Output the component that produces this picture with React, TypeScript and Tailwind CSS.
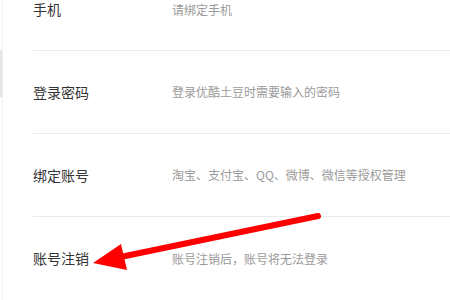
const rows = [
  { label: '手机', desc: '请绑定手机' },
  { label: '登录密码', desc: '登录优酷土豆时需要输入的密码' },
  { label: '绑定账号', desc: '淘宝、支付宝、QQ、微博、微信等授权管理' },
  { label: '账号注销', desc: '账号注销后，账号将无法登录' },
];

const App = () => {
  return (
    <div
      className="relative flex w-[450px] h-[300px] overflow-hidden bg-white"
      style={{ fontFamily: '"Noto Sans CJK SC", "Noto Sans", sans-serif' }}
    >
      {/* scrollbar remnant on the far left */}
      <div className="w-[2px] shrink-0">
        <div className="mt-[50px] h-[47px] bg-[#e6e6e6]" />
      </div>

      <div className="flex-1 border-l border-[#efefef] pl-[30px]">
        <div className="-mt-[31px] divide-y divide-[#ebebeb]">
          {rows.map((row) => (
            <div key={row.label} className="flex items-center h-[83px] first:h-[82px]">
              <span className="w-[139px] shrink-0 text-[14px] text-[#333]">{row.label}</span>
              <span className="text-[12px] text-[#9a9a9a]">{row.desc}</span>
            </div>
          ))}
        </div>
      </div>

      {/* annotation arrow */}
      <svg className="absolute inset-0 pointer-events-none" width="450" height="300" viewBox="0 0 450 300">
        <line x1="318" y1="216" x2="118" y2="257.5" stroke="#ff0000" strokeWidth="6" strokeLinecap="round" />
        <polygon points="93,263 121,244 127,270" fill="#ff0000" />
      </svg>
    </div>
  );
};

export default App;
